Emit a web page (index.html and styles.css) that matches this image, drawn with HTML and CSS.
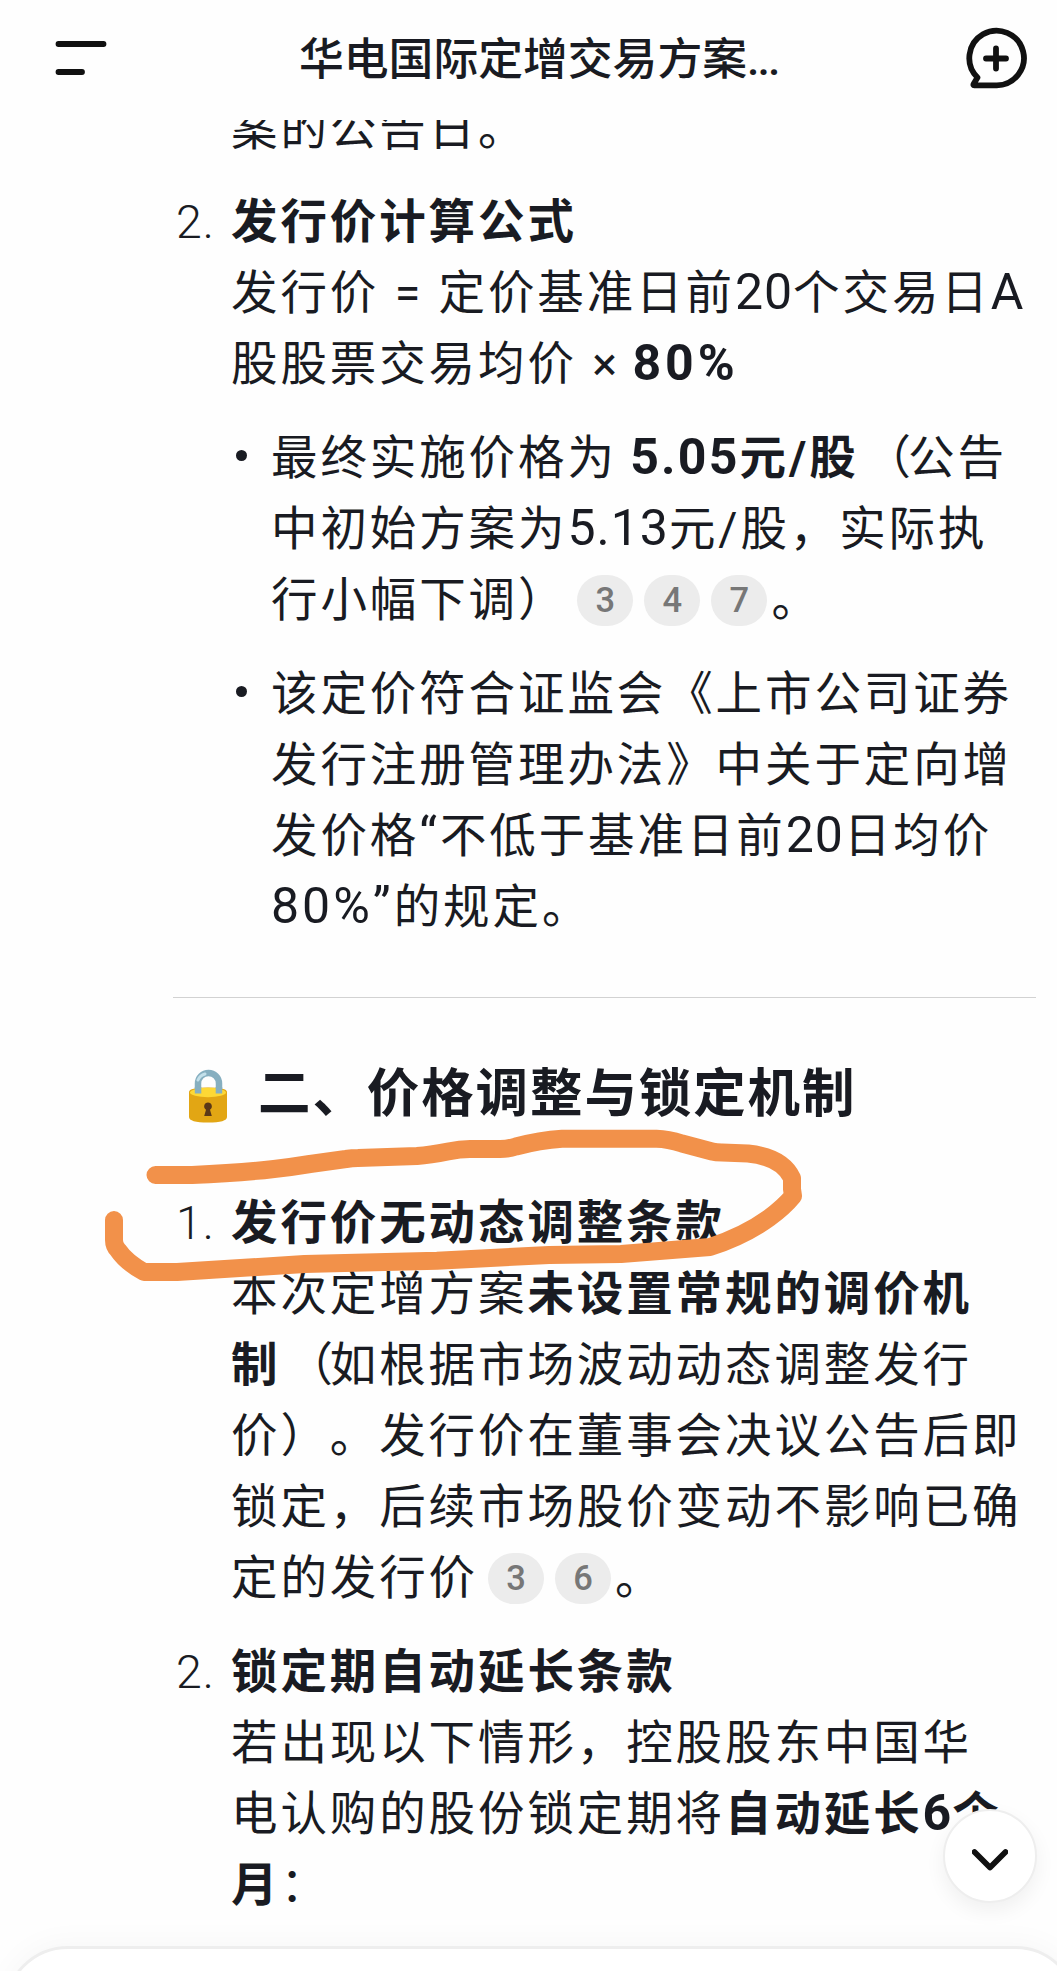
FILE: index.html
```html
<!DOCTYPE html>
<html lang="zh-CN">
<head>
<meta charset="utf-8">
<meta name="viewport" content="width=device-width">
<title>华电国际定增交易方案</title>
<link rel="stylesheet" href="styles.css">
</head>
<body>
<div class="screen">
<header class="topbar">
  <svg class="menu-icon" viewBox="0 0 52 36"><path d="M3.500 4H48.500M3.500 32H27"/></svg>
  <h1 class="title">华电国际定增交易方案<span class="dots">...</span></h1>
  <svg class="chat-icon" viewBox="0 0 64 64"><path d="M32 59.300H10.200Q9 59.300 9.600 58L13.500 51.500A27.300 27.300 0 1 1 32 59.300ZM32 22.500V42.500M22 32.500H42"/></svg>
</header>
<main class="content">
  <p class="para first"><span class="line">案的公告日。</span></p>
  <section class="item">
    <span class="num">2.</span>
    <div class="para">
      <strong class="line">发行价计算公式</strong>
      <span class="line">发行价 = 定价基准日前<span class="lat">20</span>个交易日<span class="lat">A</span></span>
      <span class="line">股股票交易均价 × <b class="lat percent">80%</b></span>
    </div>
  </section>
  <ul class="bullets">
    <li class="bullet">
      <span class="line">最终实施价格为 <b><span class="lat price">5.05</span>元/股</b><span class="open">（</span>公告</span>
      <span class="line">中初始方案为<span class="lat">5.13</span>元/股，实际执</span>
      <span class="line cited">行小幅下调）<span class="refs"><i class="ref">3</i><i class="ref">4</i><i class="ref">7</i></span>。</span>
    </li>
    <li class="bullet">
      <span class="line">该定价符合证监会《上市公司证券</span>
      <span class="line">发行注册管理办法》中关于定向增</span>
      <span class="line">发价格<span class="lat wide">“</span>不低于基准日前<span class="lat">20</span>日均价</span>
      <span class="line"><span class="lat wide">80%”</span>的规定。</span>
    </li>
  </ul>
  <hr class="rule">
  <h2 class="heading">
    <svg class="lock" viewBox="0 0 38 56">
      <path d="M9 26V16.500a10.500 10.500 0 0 1 21 0V26" fill="none" stroke="#86afc0" stroke-width="6.500"/>
      <path d="M9 13a10.500 10.500 0 0 1 7-6" fill="none" stroke="#c3e0ea" stroke-width="3" stroke-linecap="round"/>
      <path d="M0 25Q0 20.500 19 20.500T38 25V50Q38 55.500 19 55.500T0 50Z" fill="#e2a614"/>
      <ellipse cx="19" cy="25.500" rx="18" ry="4.700" fill="#fdd835"/>
      <path d="M5.800 20V26.500h6.500V20zM26.700 20V26.500h6.500V20z" fill="#86afc0"/>
      <path d="M19 35.500a3.900 3.900 0 0 1 2 7.200l1.800 6.300h-7.600l1.800-6.300a3.900 3.900 0 0 1 2-7.200z" fill="#5a3818"/>
    </svg>
    <span>二、价格调整与锁定机制</span>
  </h2>
  <section class="item">
    <span class="num">1.</span>
    <div class="para">
      <strong class="line">发行价无动态调整条款</strong>
      <span class="line">本次定增方案<b>未设置常规的调价机</b></span>
      <span class="line"><b>制</b><span class="open">（</span>如根据市场波动动态调整发行</span>
      <span class="line">价）。发行价在董事会决议公告后即</span>
      <span class="line">锁定，后续市场股价变动不影响已确</span>
      <span class="line cited">定的发行价<span class="refs"><i class="ref">3</i><i class="ref">6</i></span>。</span>
    </div>
  </section>
  <section class="item">
    <span class="num">2.</span>
    <div class="para">
      <strong class="line">锁定期自动延长条款</strong>
      <span class="line">若出现以下情形，控股股东中国华</span>
      <span class="line">电认购的股份锁定期将<b>自动延长<span class="lat">6</span>个</b></span>
      <span class="line"><b>月</b>：</span>
    </div>
  </section>
</main>
<svg class="marker" viewBox="0 0 1057 1971"><path d="M155.500 1175H192Q240 1173 274 1169Q292 1167 310 1164L346 1159Q352 1158 358 1158L417 1156Q430 1155 448 1151.500Q460 1149 470 1149H500Q508 1149 516 1146.500Q540 1140 562 1138.700H656.500Q668 1139 682 1143.500L712 1151.500Q716 1152.500 722 1152.500L748 1153.500Q782 1157 792 1178V1189L793 1196Q784 1207 769 1218Q744 1236 710 1247L621 1254L549 1255L437 1260.700L304.500 1264L177 1272H144Q126 1262 118 1250Q114 1246 114 1240V1220"/></svg>
<button class="scroll-down" aria-label="向下滚动"><svg viewBox="0 0 36 24"><path d="M2.500 4L18 19.500L33.500 4"/></svg></button>
<div class="composer"></div>
</div>
</body>
</html>
```
FILE: styles.css
```css
* { box-sizing: border-box; }
body {
  margin: 0;
  background: #fefefe;
  color: #191b22;
  font-family: Roboto, "Noto Sans CJK SC", sans-serif;
  text-spacing-trim: space-all;
}
.screen {
  position: relative;
  height: 1971px;
  overflow: hidden;
}
.topbar {
  height: 120px;
  padding: 0 28px 0 55px;
  display: flex;
  align-items: flex-start;
}
.topbar svg, .scroll-down svg {
  fill: none;
  stroke: #111;
  stroke-width: 5.800;
  stroke-linecap: round;
  stroke-linejoin: round;
}
.menu-icon { width: 52px; height: 36px; margin-top: 40px; }
.chat-icon { width: 64px; height: 64px; margin: 26px 1px 0 auto; }
.title {
  margin: 24px 0 0 192px;
  font-size: 44.800px;
  font-weight: 500;
  line-height: 72px;
  white-space: nowrap;
}
.dots { letter-spacing: -2px; }
.content {
  height: 1851px;
  padding-left: 173px;
  overflow: hidden;
  font-size: 46.500px;
  letter-spacing: 2.900px;
  word-spacing: 1px;
  line-height: 71.100px;
}
.para { margin: 0; }
.first { margin: -26px 0 22px 58px; }
.line { display: block; white-space: nowrap; }
.lat { font-size: 50px; letter-spacing: 1px; line-height: 0; }
.percent { margin-left: -3px; letter-spacing: 4px; }
.price { margin-left: -2px; letter-spacing: 2.200px; }
.wide { letter-spacing: 3px; }
.open { margin: 0 -6px 0 6px; }
.item {
  display: grid;
  grid-template-columns: 58px 1fr;
  margin-bottom: 22.500px;
}
.num { padding-left: 3px; letter-spacing: 1px; font-weight: 300; }
.bullets { list-style: none; margin: 0; padding: 0 0 0 62px; }
.bullet {
  position: relative;
  padding-left: 36px;
  margin-bottom: 22.500px;
}
.bullet::before {
  content: "";
  position: absolute;
  left: 1px;
  top: 27px;
  width: 11px;
  height: 11px;
  border-radius: 50%;
  background: #191b22;
}
.cited { display: flex; align-items: center; }
.refs { display: flex; gap: 11px; margin: 0 4px 0 10px; }
.ref {
  width: 56px;
  height: 51px;
  border-radius: 26px;
  background: #ececec;
  color: #777;
  font-size: 34.500px;
  font-style: normal;
  font-weight: 500;
  letter-spacing: 0;
  line-height: 50px;
  text-align: center;
}
.rule {
  width: 863px;
  height: 1px;
  margin: 54px 0 0;
  border: 0;
  background: #d2d2d2;
}
.heading {
  display: flex;
  align-items: center;
  gap: 31px;
  margin: 56px 0 53.500px 16px;
  height: 80px;
  font-size: 52.500px;
  letter-spacing: 1.900px;
  line-height: 80px;
  white-space: nowrap;
}
.lock { width: 38px; height: 56px; margin-top: 1px; }
.marker {
  position: absolute;
  left: 0;
  top: 0;
  width: 1057px;
  height: 1971px;
  fill: none;
  stroke: #f2914a;
  stroke-width: 18;
  stroke-linecap: round;
  stroke-linejoin: round;
  pointer-events: none;
}
.scroll-down {
  position: absolute;
  left: 943px;
  top: 1809px;
  width: 94px;
  height: 94px;
  padding: 0;
  display: grid;
  place-items: center;
  border: 2px solid #eee;
  border-radius: 50%;
  background: #fff;
  box-shadow: 0 8px 20px rgba(0, 0, 0, .06);
}
.scroll-down svg { width: 36px; height: 24px; margin-top: 8px; }
.composer {
  position: absolute;
  left: 4px;
  right: -22px;
  top: 1946px;
  height: 140px;
  border: 3px solid #eee;
  border-radius: 64px;
  background: #fff;
  box-shadow: 0 -4px 30px rgba(0, 0, 0, .03);
}
```
